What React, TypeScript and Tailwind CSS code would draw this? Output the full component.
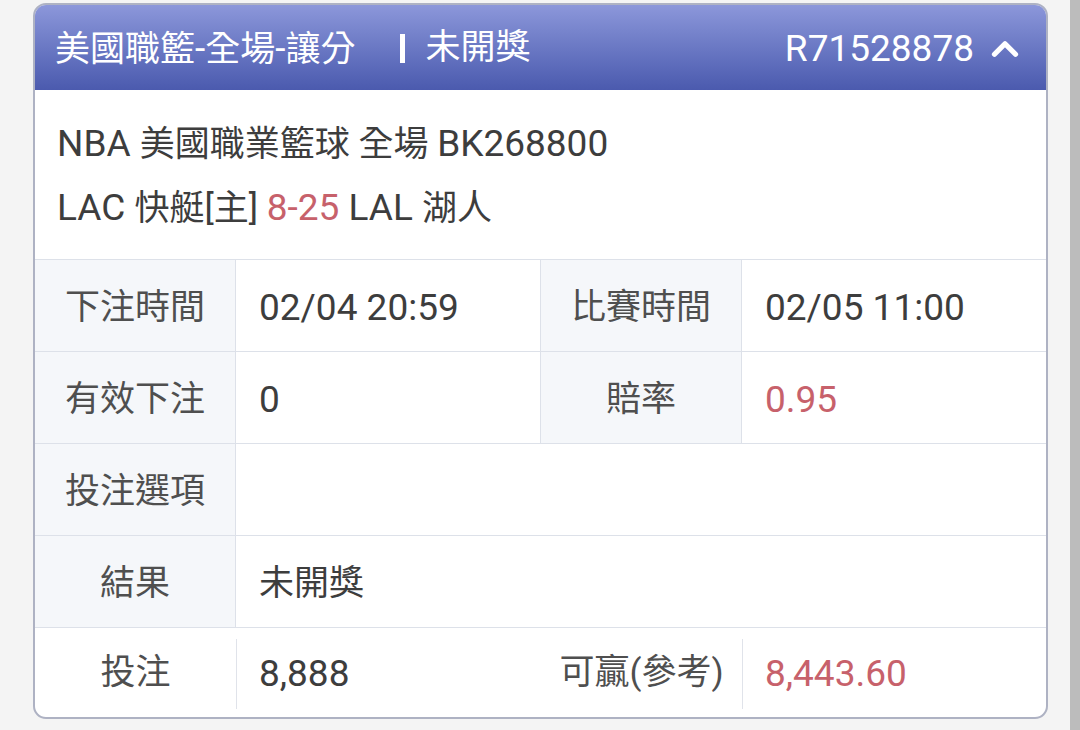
import React from "react";
import { ChevronUp } from "lucide-react";

const FONT = "font-['Roboto','Noto_Sans_CJK_TC',sans-serif]";

// latin glyphs in the screenshot run a bit wider than the CJK ones
const L: React.FC<{ children: React.ReactNode; className?: string }> = ({ children, className = "" }) => (
  <span className={`text-[37px] ${className}`}>{children}</span>
);

type Cell = { label: string; value: React.ReactNode; red?: boolean };

const LabelCell: React.FC<{ text: string }> = ({ text }) => (
  <div className="w-[201px] shrink-0 bg-[#f5f7fa] border-r border-[#dde1e9] flex items-center justify-center text-[#4f4f4f] pt-[5px]">
    {text}
  </div>
);

const ValueCell: React.FC<{ children?: React.ReactNode; red?: boolean; wide?: boolean }> = ({
  children,
  red,
  wide,
}) => (
  <div
    className={`${wide ? "flex-1" : "w-[305px] shrink-0 border-r border-[#dde1e9]"} flex items-center pl-[23px] pt-[5px] ${
      red ? "text-[#c7616b]" : "text-[#3d3d3d]"
    }`}
  >
    {children}
  </div>
);

const PairRow: React.FC<{ a: Cell; b: Cell }> = ({ a, b }) => (
  <div className="flex h-[92px] border-b border-[#dde1e9]">
    <LabelCell text={a.label} />
    <ValueCell red={a.red}>{a.value}</ValueCell>
    <LabelCell text={b.label} />
    <ValueCell red={b.red} wide>
      {b.value}
    </ValueCell>
  </div>
);

const WideRow: React.FC<{ label: string; value?: string }> = ({ label, value }) => (
  <div className="flex h-[92px] border-b border-[#dde1e9]">
    <LabelCell text={label} />
    <ValueCell wide>{value}</ValueCell>
  </div>
);

export default function App() {
  return (
    <div className={`w-[1080px] h-[730px] flex bg-[#f4f4f4] overflow-hidden ${FONT}`}>
      <div className="flex-1 pt-[3px] pl-[33px] pr-[22px]">
        <div className="rounded-[13px] border-2 border-[#aeb2c3] bg-white overflow-hidden text-[35px]">
          {/* header */}
          <div className="h-[85px] bg-linear-to-b from-[#8c97da] to-[#4b5aae] flex items-center pl-[20px] pr-[20px] pt-[2px] text-white">
            <span>
              美國職籃<L>-</L>全場<L>-</L>讓分
            </span>
            <span className="ml-[44px] w-[5px] h-[29px] bg-white" />
            <span className="ml-[21px]">未開獎</span>
            <L className="ml-auto text-[36px]">R71528878</L>
            <ChevronUp size={42} strokeWidth={3} className="ml-[10px]" />
          </div>

          {/* match info */}
          <div className="h-[170px] border-b border-[#dde1e9] pl-[22px] pt-[22px] text-[#3d3d3d] leading-[63px]">
            <div>
              <L>NBA </L>美國職業籃球 全場 <L>BK268800</L>
            </div>
            <div>
              <L>LAC </L>快艇[主] <L className="text-[#c7616b]">8-25</L>
              <L> LAL </L>湖人
            </div>
          </div>

          <PairRow
            a={{ label: "下注時間", value: <L>02/04 20:59</L> }}
            b={{ label: "比賽時間", value: <L>02/05 11:00</L> }}
          />
          <PairRow
            a={{ label: "有效下注", value: <L>0</L> }}
            b={{ label: "賠率", value: <L>0.95</L>, red: true }}
          />
          <WideRow label="投注選項" />
          <WideRow label="結果" value="未開獎" />

          {/* stake row */}
          <div className="flex h-[89px] items-center pt-[2px]">
            <div className="w-[201px] shrink-0 h-full flex items-center justify-center text-[#4f4f4f]">
              投注
            </div>
            <div className="w-px h-[70px] bg-[#e0e3ea]" />
            <div className="w-[304px] shrink-0 pl-[22px] text-[#3d3d3d]">
              <L>8,888</L>
            </div>
            <div className="w-[201px] shrink-0 flex items-center justify-center text-[#4f4f4f]">
              可贏(參考)
            </div>
            <div className="w-px h-[70px] bg-[#e0e3ea]" />
            <div className="flex-1 pl-[22px] text-[#c7616b]">
              <L>8,443.60</L>
            </div>
          </div>
        </div>
      </div>
      <div className="w-[10px] bg-[#bcbcbc]" />
    </div>
  );
}
